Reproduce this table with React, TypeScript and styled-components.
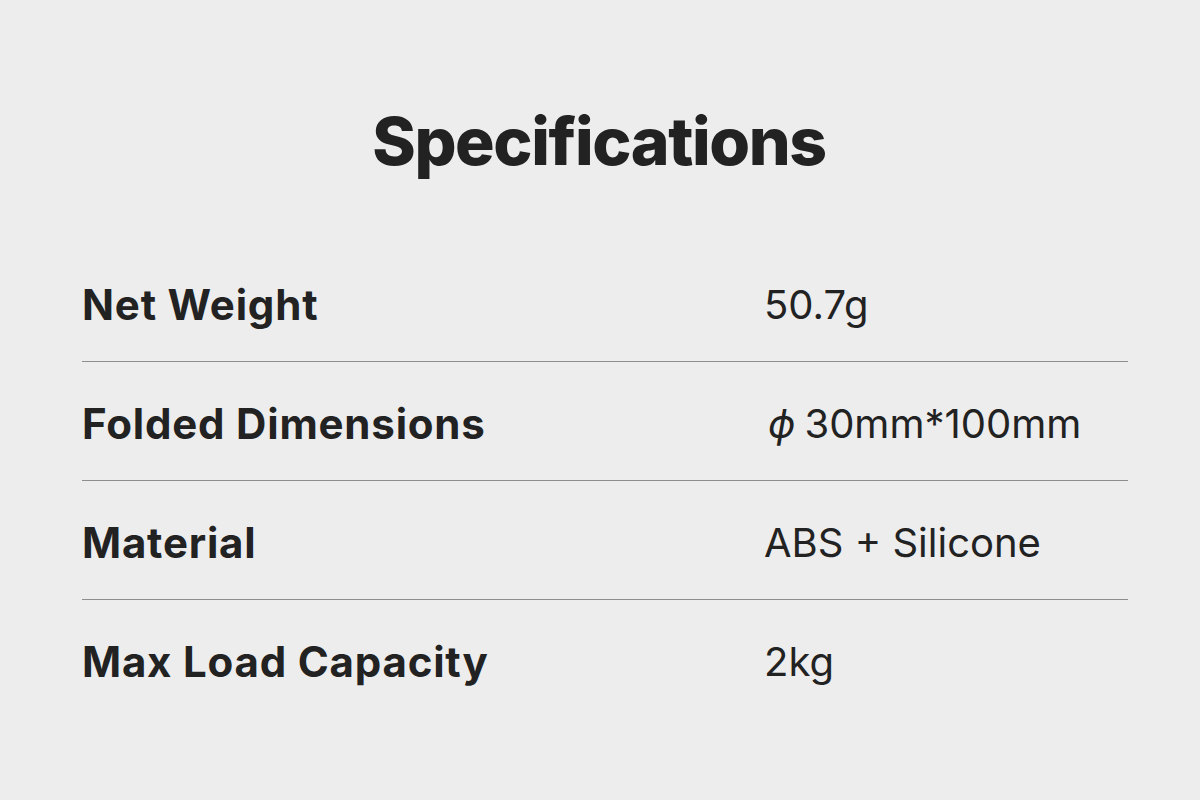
import React from "react";
import styled, { createGlobalStyle } from "styled-components";

const Global = createGlobalStyle`
  html, body { margin: 0; padding: 0; background: #ededed; }
  body { font-family: Inter, "Noto Sans", sans-serif; color: #222; }
`;

const Page = styled.main`
  width: 1200px;
  height: 800px;
  box-sizing: border-box;
  padding: 96px 72px 0 82px;
  display: flex;
  flex-direction: column;
  align-items: stretch;
`;

const Title = styled.h1`
  margin: 0;
  text-align: center;
  font-size: 66px;
  line-height: 90px;
  font-weight: 800;
  letter-spacing: -1.4px;
  color: #222;
  padding-right: 12px;
`;

const Table = styled.div`
  margin-top: 57px;
  display: flex;
  flex-direction: column;
`;

const Row = styled.div<{ $last?: boolean }>`
  display: grid;
  grid-template-columns: 682px 1fr;
  align-items: center;
  height: 118px;
  border-bottom: ${(p) => (p.$last ? "none" : "1px solid #8e8e8e")};
`;

const Label = styled.div`
  font-size: 42px;
  font-weight: 700;
  letter-spacing: 0.8px;
  color: #222;
  padding-top: 5px;
`;

const Value = styled.div`
  font-size: 40px;
  font-weight: 400;
  color: #222;
  padding-top: 5px;
`;

const Phi = styled.span`
  display: inline-block;
  font-style: italic;
  margin: 0 9px 0 4px;
`;

const specs: [string, React.ReactNode][] = [
  ["Net Weight", "50.7g"],
  ["Folded Dimensions", <><Phi>{"\u03D5"}</Phi>30mm*100mm</>],
  ["Material", "ABS + Silicone"],
  ["Max Load Capacity", "2kg"],
];

export default function App() {
  return (
    <>
      <Global />
      <Page>
        <Title>Specifications</Title>
        <Table>
          {specs.map(([k, v], i) => (
            <Row key={k} $last={i === specs.length - 1}>
              <Label>{k}</Label>
              <Value>{v}</Value>
            </Row>
          ))}
        </Table>
      </Page>
    </>
  );
}
